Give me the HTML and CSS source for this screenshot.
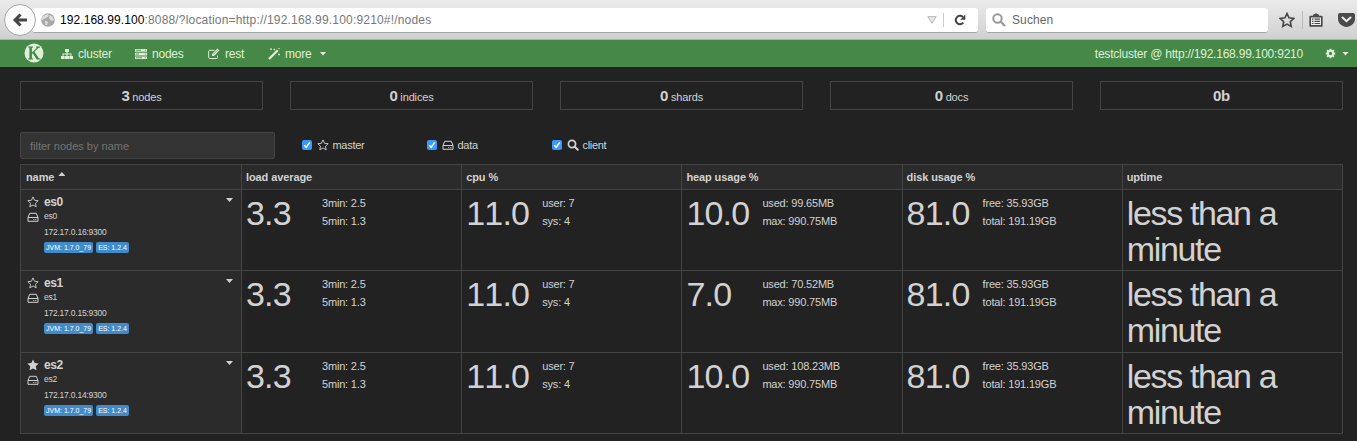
FILE: index.html
```html
<!DOCTYPE html>
<html lang="en">
<head>
<meta charset="utf-8">
<title>kopf - nodes</title>
<link rel="stylesheet" href="styles.css">
</head>
<body>
<svg class="sprite" aria-hidden="true">
  <symbol id="star-o" viewBox="0 0 12 12"><path d="M6 .9 7.55 4.25 11.2 4.7 8.5 7.2 9.2 10.8 6 9 2.8 10.8 3.5 7.2.8 4.7 4.45 4.25Z" fill="none" stroke="currentColor" stroke-width=".9"/></symbol>
  <symbol id="star" viewBox="0 0 12 12"><path d="M6 .4 7.7 4 11.7 4.5 8.8 7.3 9.5 11.3 6 9.4 2.5 11.3 3.2 7.3.3 4.5 4.3 4Z" fill="currentColor"/></symbol>
  <symbol id="hdd" viewBox="0 0 12 12"><path d="M1 6.500H11V10.300H1ZM1 6.500 2.700 2.300H9.300L11 6.500" fill="none" stroke="currentColor" stroke-linejoin="round"/><path d="M6.300 7.900h1v1h-1zM8.300 7.900h1v1h-1z" fill="currentColor"/></symbol>
  <symbol id="search" viewBox="0 0 12 12"><circle cx="5" cy="5" r="3.6" fill="none" stroke="currentColor" stroke-width="1.7"/><path d="m7.8 7.8 3 3" stroke="currentColor" stroke-width="2" stroke-linecap="round"/></symbol>
  <symbol id="check" viewBox="0 0 10 10"><path d="m2.3 5.3 1.9 2L7.8 2.4" fill="none" stroke="#fff" stroke-width="1.5"/></symbol>
</svg>

<header class="browser">
  <div class="address">
    <svg class="globe" viewBox="0 0 14 14"><circle cx="7" cy="7" r="6.8" fill="#a9a9a9"/><path d="M3 2.500 7 1l1 2-2 1.500L4 5.500 1 7Q.5 4 3 2.500ZM9 2l3 2 .8 3-2 1L9 6.500 8 5ZM4 7.500l3 1.500-1 3L4.500 12Z" fill="#dedede"/></svg>
    <span class="url"><b>192.168.99.100</b>:8088/?location=http://192.168.99.100:9210#!/nodes</span>
    <svg class="drop" viewBox="0 0 10 8"><path d="M.8.7h8.400L5 7.300Z" fill="#e8e8e8" stroke="#b5b5b5"/></svg>
    <i class="divider"></i>
    <svg class="reload" viewBox="0 0 12 12"><path d="M9.300 8.600A4.200 4.200 0 1 1 8.800 2.900" fill="none" stroke="#444" stroke-width="2"/><path d="M11.300.6V5.800H6.200Z" fill="#444"/></svg>
  </div>
  <div class="back"><svg viewBox="0 0 14 14"><path d="M7.500 1.500 2 7l5.500 5.500M2.500 7H14" fill="none" stroke="#444" stroke-width="3"/></svg></div>
  <div class="searchbox">
    <svg viewBox="0 0 14 14"><circle cx="5.500" cy="5.500" r="4.200" fill="none" stroke="#999" stroke-width="2"/><path d="m8.800 8.800 4.200 4.200" stroke="#999" stroke-width="2.200"/></svg>
    <span>Suchen</span>
  </div>
  <svg class="bookmark" viewBox="0 0 16 16"><path d="m8 1.500 2 4.300 4.800.6-3.500 3.300.9 4.700L8 12.100l-4.200 2.300.9-4.700L1.200 6.400 6 5.800Z" fill="none" stroke="#4a4a4a" stroke-width="1.700"/></svg>
  <i class="divider light"></i>
  <svg class="clip" viewBox="0 0 14 14"><path d="M1.200 3.700H12.800V12.800H1.200Z" fill="#f0f0f0" stroke="#4a4a4a" stroke-width="1.700" stroke-linejoin="round"/><path d="M4 3V1.800L7 .2l3 1.600V3ZM3 5.500H4.500v1.200H3zM5.500 5.500H11v1.200H5.500zM3 7.700H4.500v1.200H3zM5.500 7.700H11v1.200H5.500zM3 9.900H4.500v1.200H3zM5.500 9.900H11v1.200H5.500z" fill="#4a4a4a"/></svg>
  <svg class="pocket" viewBox="0 0 17 14"><path d="M2 0H15Q17 0 17 2V6Q17 11 11.500 13.300 8.500 14.700 5.500 13.300 0 11 0 6V2Q0 0 2 0Z" fill="#4a4a4a"/><path d="m4.500 4.500 4 3.700 4-3.700" fill="none" stroke="#eee" stroke-width="2" stroke-linecap="round"/></svg>
</header>

<nav class="nav">
  <svg class="logo" viewBox="0 0 20 20"><circle cx="10" cy="10" r="9.500" fill="#dff0d8"/><path d="M4.200 3.500H9V4.400L7.900 4.800V15.200L9 15.600V16.500H4.200V15.600L5.400 15.200V4.800L4.200 4.400ZM7.900 9.600 13 4.800 12 4.400V3.500h4v.9l-1.600.5-4 3.800 4.500 6.500 1.600.4v.9h-3.800L8.800 10.200 7.900 11Z" fill="#468847"/></svg>
  <a class="item cluster"><svg viewBox="0 0 12 12"><path d="M4 1h4v3H6.600v1.500H10.500V8H12v3H8.300V8h1.200V6.500H6.600V8H8v3H4V8h1.400V6.500H2.500V8h1.200v3H0V8h1.500V5.500h3.900V4H4Z" fill="currentColor"/></svg>cluster</a>
  <a class="item nodes"><svg viewBox="0 0 12 12"><path d="M0 1h12v2.700H0zM0 4.700h12v2.700H0zM0 8.400h12v2.700H0z" fill="currentColor"/><path d="M1 2.300h5M1 6h3M1 9.700h6M10 2.300h1M10 6h1M10 9.700h1" stroke="#468847" stroke-width=".8"/></svg>nodes</a>
  <a class="item rest"><svg viewBox="0 0 12 12"><path d="M9.500 7.500v2q0 1-1 1H1.700q-1 0-1-1V3.300q0-1 1-1H6.500" fill="none" stroke="currentColor"/><path d="M4 6 9.400.6l2 2L6 8H4Z" fill="currentColor"/><path d="m5.300 6.300 4-4" stroke="#468847" stroke-width=".6"/></svg>rest</a>
  <a class="item more"><svg viewBox="0 0 12 12"><path d="m1 11 8.800-8.800" stroke="currentColor" stroke-width="2.200"/><path d="M2 1.200h2M3 .2v2M5.500 1.500h1.800M6.400.6v1.800M10 6.500h2M11 5.500v2M10.300.5h1.500" stroke="currentColor" stroke-width=".8"/></svg>more<i class="caret"></i></a>
  <span class="host">testcluster @ http://192.168.99.100:9210</span>
  <svg class="gear" viewBox="0 0 12 12"><circle cx="6" cy="6" r="2.900" fill="none" stroke="currentColor" stroke-width="2.200"/><path d="M6 .8v2M6 9.200v2M.8 6h2M9.200 6h2M2.300 2.300l1.300 1.300M8.400 8.400l1.300 1.300M9.700 2.300 8.400 3.600M3.600 8.400 2.300 9.700" stroke="currentColor" stroke-width="2"/></svg>
  <i class="caret"></i>
</nav>

<main class="content">
  <section class="stats">
    <div><b>3</b> nodes</div><div><b>0</b> indices</div><div><b>0</b> shards</div><div><b>0</b> docs</div><div><b>0b</b></div>
  </section>

  <section class="filters">
    <input type="text" placeholder="filter nodes by name">
    <label><svg class="box"><use href="#check"/></svg><svg class="ico"><use href="#star-o"/></svg>master</label>
    <label><svg class="box"><use href="#check"/></svg><svg class="ico"><use href="#hdd"/></svg>data</label>
    <label><svg class="box"><use href="#check"/></svg><svg class="ico"><use href="#search"/></svg>client</label>
  </section>

  <table class="grid">
    <thead><tr><th>name<i class="caret up"></i></th><th>load average</th><th>cpu %</th><th>heap usage %</th><th>disk usage %</th><th>uptime</th></tr></thead>
    <tbody>
    <tr>
      <td><div class="node"><div class="marks"><svg><use href="#star-o"/></svg><svg><use href="#hdd"/></svg></div><div class="info"><strong>es0</strong><span>es0</span><span class="ip">172.17.0.16:9300</span><div class="tags"><em>JVM: 1.7.0_79</em><em>ES: 1.2.4</em></div></div><i class="caret"></i></div></td>
      <td><div class="metric"><b>3.3</b><p>3min: 2.5<br>5min: 1.3</p></div></td>
      <td><div class="metric"><b>11.0</b><p>user: 7<br>sys: 4</p></div></td>
      <td><div class="metric"><b>10.0</b><p>used: 99.65MB<br>max: 990.75MB</p></div></td>
      <td><div class="metric"><b>81.0</b><p>free: 35.93GB<br>total: 191.19GB</p></div></td>
      <td><div class="uptime">less than a minute</div></td>
    </tr>
    <tr>
      <td><div class="node"><div class="marks"><svg><use href="#star-o"/></svg><svg><use href="#hdd"/></svg></div><div class="info"><strong>es1</strong><span>es1</span><span class="ip">172.17.0.15:9300</span><div class="tags"><em>JVM: 1.7.0_79</em><em>ES: 1.2.4</em></div></div><i class="caret"></i></div></td>
      <td><div class="metric"><b>3.3</b><p>3min: 2.5<br>5min: 1.3</p></div></td>
      <td><div class="metric"><b>11.0</b><p>user: 7<br>sys: 4</p></div></td>
      <td><div class="metric"><b>7.0</b><p>used: 70.52MB<br>max: 990.75MB</p></div></td>
      <td><div class="metric"><b>81.0</b><p>free: 35.93GB<br>total: 191.19GB</p></div></td>
      <td><div class="uptime">less than a minute</div></td>
    </tr>
    <tr>
      <td><div class="node"><div class="marks"><svg><use href="#star"/></svg><svg><use href="#hdd"/></svg></div><div class="info"><strong>es2</strong><span>es2</span><span class="ip">172.17.0.14:9300</span><div class="tags"><em>JVM: 1.7.0_79</em><em>ES: 1.2.4</em></div></div><i class="caret"></i></div></td>
      <td><div class="metric"><b>3.3</b><p>3min: 2.5<br>5min: 1.3</p></div></td>
      <td><div class="metric"><b>11.0</b><p>user: 7<br>sys: 4</p></div></td>
      <td><div class="metric"><b>10.0</b><p>used: 108.23MB<br>max: 990.75MB</p></div></td>
      <td><div class="metric"><b>81.0</b><p>free: 35.93GB<br>total: 191.19GB</p></div></td>
      <td><div class="uptime">less than a minute</div></td>
    </tr>
    </tbody>
  </table>
</main>
</body>
</html>
```
FILE: styles.css
```css
* { box-sizing: border-box; }
body {
  margin: 0;
  height: 441px;
  overflow: hidden;
  background: #222;
  color: #d2d2d2;
  font: 11px/18px "Liberation Sans", Arial, sans-serif;
}
svg { display: block; flex: none; }
.sprite { position: absolute; width: 0; height: 0; }

/* browser toolbar */
.browser {
  position: relative;
  display: flex;
  align-items: center;
  height: 40px;
  padding-left: 32px;
  background: linear-gradient(#ebebeb, #d0d0d0);
  border-bottom: 1px solid #b3aab3;
  font-size: 12px;
}
.address, .searchbox {
  display: flex;
  align-items: center;
  height: 25px;
  margin-top: 1px;
  background: #fff;
  border-bottom: 1px solid #a5a5a5;
  border-radius: 3px;
}
.address { width: 946px; padding-left: 9px; }
.globe { width: 14px; height: 14px; }
.url { flex: 1; margin-left: 5px; color: #777; letter-spacing: .18px; }
.url b { font-weight: normal; color: #000; letter-spacing: .07px; }
.drop { width: 10px; height: 8px; }
.divider { width: 1px; height: 14px; margin: 0 10px 0 6px; background: #ccc; }
.reload { width: 12px; height: 12px; margin-right: 12px; }
.back {
  position: absolute;
  left: 4px;
  top: 4px;
  width: 32px;
  height: 32px;
  padding: 8px;
  background: #fafafa;
  border: 1px solid #a6a6a6;
  border-radius: 50%;
}
.back svg { width: 14px; height: 14px; }
.searchbox { width: 282px; margin-left: 8px; padding-left: 6px; gap: 6px; color: #666; letter-spacing: .1px; }
.searchbox svg { width: 14px; height: 14px; }
.bookmark { width: 16px; height: 16px; margin-left: 11px; }
.divider.light { height: 18px; margin: 0 6px 0 7px; background: #bbb; }
.clip { width: 14px; height: 14px; }
.pocket { width: 17px; height: 14px; margin-left: 15px; }

/* application bar */
.nav {
  display: flex;
  align-items: center;
  height: 27px;
  padding-left: 24px;
  background: #468847;
  color: #dff0d8;
  font-size: 12px;
  letter-spacing: -.22px;
}
.logo { width: 20px; height: 20px; margin-top: -2px; }
.item { display: flex; align-items: center; gap: 5px; }
.item svg { width: 12px; height: 12px; }
.cluster { margin-left: 17px; width: 74px; }
.nodes { width: 73px; }
.rest { width: 60px; }
.host { margin-left: auto; }
.gear { width: 11px; height: 11px; margin: 0 6px 0 22px; }
.nav > .caret { margin-right: 8px; }
.caret {
  display: inline-block;
  width: 7px;
  height: 4px;
  background: currentColor;
  clip-path: polygon(0 0, 100% 0, 50% 100%);
}
.more .caret { margin-left: 3px; }
.caret.up { clip-path: polygon(50% 0, 100% 100%, 0 100%); margin-left: 4px; vertical-align: 5px; }

/* cluster totals */
.content { padding: 14px 14px 0 20px; }
.stats { display: grid; grid-template-columns: repeat(5, 243px); gap: 27px; }
.stats div { height: 29px; border: 1px solid #444; text-align: center; line-height: 28px; letter-spacing: -.15px; }
.stats b { font-size: 15px; letter-spacing: -.3px; }

/* filters */
.filters { display: flex; align-items: center; margin-top: 22px; height: 27px; }
.filters input {
  width: 255px;
  height: 27px;
  margin-right: 27px;
  padding: 1px 9px 0;
  background: #333;
  border: 1px solid #444;
  border-radius: 2px;
  font: inherit;
}
.filters input::placeholder { color: #747474; opacity: 1; }
.filters label { display: flex; align-items: center; width: 125px; margin-top: -2px; letter-spacing: -.3px; }
.box { width: 10px; height: 10px; margin-right: 5px; background: #3b99fc; border-radius: 2px; }
.ico { width: 12px; height: 12px; margin-right: 3.5px; }

/* node table */
.grid { width: 1323px; margin-top: 5px; border-collapse: collapse; table-layout: fixed; }
.grid th, .grid td { padding: 0 4px; border: 1px solid #444; text-align: left; vertical-align: top; }
.grid th { height: 25px; padding-top: 4px; background: #2b2b2b; line-height: 17px; letter-spacing: -.1px; }
.grid th:first-child { width: 221px; padding-left: 5px; }
.grid td { height: 81px; }
.grid tr:nth-child(2) td { height: 82px; }
.grid td:first-child { background: #2b2b2b; }
.node { display: flex; padding: 5px 4px 0 3px; }
.marks { display: flex; flex-direction: column; gap: 4px; width: 16px; padding-top: 1px; }
.marks svg { width: 12px; height: 12px; margin-left: -1px; }
.marks svg + svg { margin-top: -1px; }
.info { flex: 1; display: flex; flex-direction: column; font-size: 8.5px; line-height: 14px; letter-spacing: -.23px; }
.info strong { font-size: 12px; letter-spacing: -.4px; line-height: 14px; }
.info .ip { margin-top: 2px; }
.tags { display: flex; gap: 3px; margin-top: 3px; }
.tags em { height: 11px; padding: 0 2px; border-radius: 2px; background: #428bca; color: #fff; font-style: normal; font-size: 7px; line-height: 11px; letter-spacing: 0; }
.node > .caret { margin-top: 3px; }
.metric { display: flex; padding-top: 4px; }
.metric b { width: 65px; margin-right: 11px; font-weight: normal; font-size: 34px; line-height: 38px; letter-spacing: -.8px; font-kerning: none; white-space: nowrap; }
.metric p { margin: 0; letter-spacing: -.18px; }
.uptime { padding-top: 5px; font-size: 34px; line-height: 36px; letter-spacing: -1.35px; }
```
